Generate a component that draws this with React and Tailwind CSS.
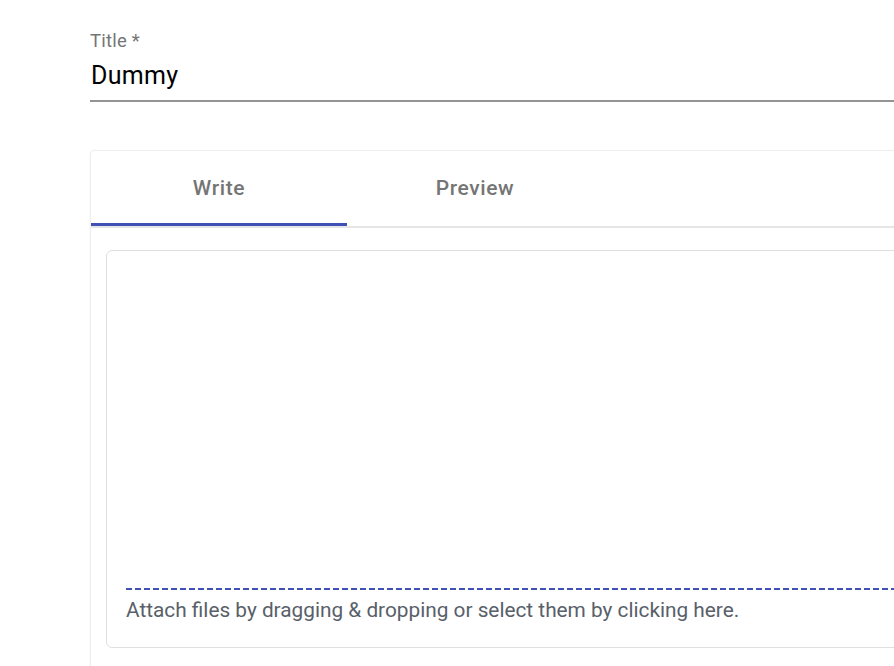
import React from 'react';

const TitleField = () => (
  <div className="w-full">
    <div className="text-[18.5px] leading-[24px] tracking-[0.2px] text-[#757575]">Title *</div>
    <div className="mt-[7px] pb-[8px] border-b-2 border-[#949494]">
      <div className="pl-[1px] text-[25px] leading-[32px] tracking-[0.3px] text-black">Dummy</div>
    </div>
  </div>
);

const Tabs = () => (
  <div>
    <div className="flex h-[75px]">
      <div className="w-[256px] flex items-center justify-center pt-[3px] border-b-[3px] border-[#3f51b5] text-[21px] tracking-[0.6px] font-medium text-[#757575]">
        Write
      </div>
      <div className="w-[256px] flex items-center justify-center text-[21px] tracking-[0.6px] font-medium text-[#757575]">
        Preview
      </div>
    </div>
    <div className="h-[2px] bg-[#e6e6e6]" />
  </div>
);

// editor box with the drop zone at the bottom
const Editor = () => (
  <div className="h-[398px] border border-[#e0e0e0] rounded-[6px] flex flex-col">
    <div className="flex-1" />
    <div className="pl-[19px]">
      <div className="h-[2px] bg-[repeating-linear-gradient(to_right,#3f51b5_0_6px,transparent_6px_9px)]" />
      <div className="mt-[5px] mb-[22px] text-[20.8px] leading-[30px] text-[#586069]">
        Attach files by dragging &amp; dropping or select them by clicking here.
      </div>
    </div>
  </div>
);

function App() {
  return (
    <div className="w-[894px] h-[666px] overflow-hidden bg-white font-['Roboto',sans-serif]">
      <div className="w-[1100px] pl-[90px] pt-[29px]">
        <TitleField />
        <div className="mt-[48px] border border-[#eeeeee] rounded-[4px] shadow-[0_1px_3px_rgba(0,0,0,0.05)] bg-white">
          <Tabs />
          <div className="pl-[15px] pt-[22px] pb-[20px]">
            <Editor />
          </div>
        </div>
      </div>
    </div>
  );
}

export default App;
